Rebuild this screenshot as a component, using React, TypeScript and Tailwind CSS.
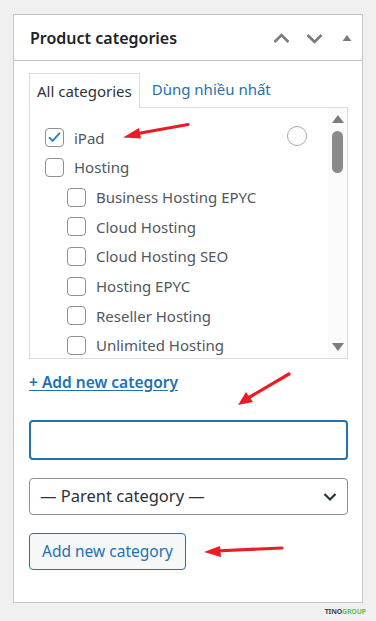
import React from 'react';

const items = [
  { label: 'iPad', checked: true, child: false },
  { label: 'Hosting', checked: false, child: false },
  { label: 'Business Hosting EPYC', checked: false, child: true },
  { label: 'Cloud Hosting', checked: false, child: true },
  { label: 'Cloud Hosting SEO', checked: false, child: true },
  { label: 'Hosting EPYC', checked: false, child: true },
  { label: 'Reseller Hosting', checked: false, child: true },
  { label: 'Unlimited Hosting', checked: false, child: true },
];

function Checkbox({ checked }: { checked: boolean }) {
  return (
    <span className="flex h-[19px] w-[19px] shrink-0 items-center justify-center rounded-[4px] border border-[#8c8f94] bg-white">
      {checked && (
        <svg width="15" height="15" viewBox="0 0 20 20">
          <path d="M3.5 10.5l4 4 9-10" fill="none" stroke="#3582c4" strokeWidth="2.8" strokeLinecap="round" strokeLinejoin="round" />
        </svg>
      )}
    </span>
  );
}

function Arrows() {
  return (
    <svg className="pointer-events-none absolute inset-0" width="376" height="621" viewBox="0 0 376 621">
      {/* arrow near iPad */}
      <path d="M188 124.5 L135 134" stroke="#ec1c24" strokeWidth="3.2" strokeLinecap="round" />
      <polygon points="123,137.5 139,128 141,138.5" fill="#ec1c24" />
      {/* arrow towards input */}
      <path d="M289 374 L248 398" stroke="#ec1c24" strokeWidth="3.2" strokeLinecap="round" />
      <polygon points="238,405 246,392 253,402" fill="#ec1c24" />
      {/* arrow towards button */}
      <path d="M282 548 L215 551" stroke="#ec1c24" strokeWidth="3.2" strokeLinecap="round" />
      <polygon points="204,552 220,546 221,557" fill="#ec1c24" />
    </svg>
  );
}

export default function App() {
  return (
    <div className="relative h-[621px] w-[376px] overflow-hidden bg-[#f0f0f1] px-[13px] pt-[14px]" style={{ fontFamily: '"Noto Sans", "Open Sans", sans-serif' }}>
      <div className="h-[589px] w-[350px] border border-[#c3c4c7] bg-white">
        {/* Header */}
        <div className="flex h-[46px] items-center justify-between border-b border-[#c3c4c7] pl-4 pr-[10px]">
          <h2 className="text-[16px] font-semibold text-[#1d2327]">Product categories</h2>
          <div className="flex items-center">
            <svg width="33" height="20" viewBox="0 0 33 20">
              <path d="M1.5 14l7-7 7 7" fill="none" stroke="#787c82" strokeWidth="2.6" />
            </svg>
            <svg width="36" height="20" viewBox="0 0 36 20">
              <path d="M1.5 7l7 7 7-7" fill="none" stroke="#787c82" strokeWidth="2.6" />
            </svg>
            <svg width="10" height="20" viewBox="0 0 10 20">
              <polygon points="0.5,13 5,7 9.5,13" fill="#787c82" />
            </svg>
          </div>
        </div>

        {/* Body */}
        <div className="pl-[15px] pr-[14px] pt-[11px]">
          <div className="flex items-end text-[15px]">
            <div className="relative -mb-px h-[35px] border border-b-0 border-[#dcdcde] bg-white px-[7px] pt-[6px] text-[#2c3338]">
              All categories
            </div>
            <div className="h-[35px] px-[12px] pt-[6px] text-[#2271b1]">Dùng nhiều nhất</div>
          </div>
          <div className="flex h-[252px] border border-[#dcdcde] bg-white">
            <div className="relative flex-1 pl-[15px] pt-[15px]">
              {items.map((it) => (
                <div key={it.label} className={`flex h-[29.7px] items-center gap-[10px] ${it.child ? 'pl-[22px]' : ''}`}>
                  <Checkbox checked={it.checked} />
                  <span className="whitespace-nowrap text-[15px] text-[#50575e]">{it.label}</span>
                </div>
              ))}
              <span className="absolute left-[257px] top-[18px] h-[20px] w-[20px] rounded-full border border-[#a7aaad] bg-white" />
            </div>
            <div className="flex w-[19px] flex-col items-center bg-[#fafafa] py-[7px]">
              <svg width="12" height="8" viewBox="0 0 12 8">
                <polygon points="0,8 6,0 12,8" fill="#7c7c7c" />
              </svg>
              <div className="mt-[8px] h-[42px] w-[11px] rounded-full bg-[#8a8a8a]" />
              <div className="flex-1" />
              <svg width="12" height="8" viewBox="0 0 12 8">
                <polygon points="0,0 12,0 6,8" fill="#7c7c7c" />
              </svg>
            </div>
          </div>

          <div className="mt-[11px]">
            <a href="#" className="text-[15.5px] font-semibold text-[#2271b1] underline underline-offset-2">
              + Add new category
            </a>
          </div>

          <input type="text" className="mt-[26px] block h-[40px] w-full rounded-[4px] border-2 border-[#2271b1] bg-white outline-none" />

          <div className="mt-[18px] flex h-[37px] items-center justify-between rounded-[4px] border border-[#8c8f94] bg-white pl-[10px] pr-[10px] text-[16.5px] text-[#2c3338]">
            <span>— Parent category —</span>
            <svg width="14" height="10" viewBox="0 0 14 10">
              <path d="M1.5 2l5.5 5.5 5.5-5.5" fill="none" stroke="#2c3338" strokeWidth="2.2" />
            </svg>
          </div>

          <button className="mt-[18px] h-[37px] w-[157px] rounded-[4px] border border-[#2271b1] bg-[#f6f7f7] text-[15.5px] text-[#2271b1]">
            Add new category
          </button>
        </div>
      </div>

      <div className="absolute bottom-[4px] right-[10px] text-[7px] font-bold tracking-tight">
        <span className="text-[#444]">TINO</span>
        <span className="text-[#6dbf4b]">GROUP</span>
      </div>

      <Arrows />
    </div>
  );
}
